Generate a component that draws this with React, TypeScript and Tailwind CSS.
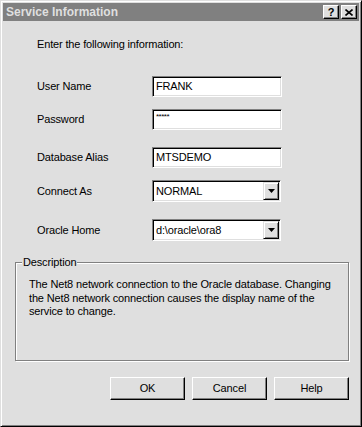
import React from 'react';

const font = { fontFamily: '"Liberation Sans", Arial, sans-serif' };

const sunken =
  'bg-white border border-t-[#808080] border-l-[#808080] border-b-white border-r-white shadow-[inset_1px_1px_0_#000,inset_-1px_-1px_0_#dfdfdf]';

const raised =
  'bg-[#dfdfdf] border border-t-white border-l-white border-b-black border-r-black shadow-[inset_-1px_-1px_0_#808080]';

const TextBox: React.FC<{ children: React.ReactNode }> = ({ children }) => (
  <div className={`w-[130px] h-[21px] flex items-center px-[3px] ${sunken}`}>{children}</div>
);

const ComboBox: React.FC<{ value: string }> = ({ value }) => (
  <div className={`w-[129px] h-[22px] flex items-center pl-[3px] pr-[1px] ${sunken}`}>
    <span className="flex-1">{value}</span>
    <div className="w-[16px] h-[18px] flex items-center justify-center border border-t-[#dfdfdf] border-l-[#dfdfdf] border-b-black border-r-black bg-[#dfdfdf] shadow-[inset_1px_1px_0_#fff,inset_-1px_-1px_0_#808080]">
      <svg width="7" height="4" viewBox="0 0 7 4">
        <path d="M0 0h7L3.5 4z" fill="#000" />
      </svg>
    </div>
  </div>
);

const Row: React.FC<{ label: string; mt: string; children: React.ReactNode }> = ({ label, mt, children }) => (
  <div className={`flex items-center ml-[34px] ${mt}`}>
    <div className="w-[115px]">{label}</div>
    {children}
  </div>
);

export default function App() {
  return (
    <div
      className="w-[362px] h-[427px] bg-[#dfdfdf] border border-t-[#dfdfdf] border-l-[#dfdfdf] border-b-black border-r-black shadow-[inset_1px_1px_0_#fff,inset_-1px_-1px_0_#808080] p-[2px] flex flex-col text-[11px] leading-[13px] tracking-[-0.15px] text-black"
      style={font}
    >
      {/* title bar */}
      <div className="h-[18px] bg-[#808080] flex items-center pl-[3px] pr-[2px]">
        <span className="flex-1 text-[12px] font-bold text-[#dfdfdf] tracking-normal">Service Information</span>
        <div className="flex gap-[2px]">
          <div className={`w-[16px] h-[14px] flex items-center justify-center font-bold text-[11px] leading-none ${raised}`}>
            ?
          </div>
          <div className={`w-[16px] h-[14px] flex items-center justify-center ${raised}`}>
            <svg width="8" height="7" viewBox="0 0 8 7">
              <path d="M0.5 0.5L7.5 6.5M7.5 0.5L0.5 6.5" stroke="#000" strokeWidth="1.6" />
            </svg>
          </div>
        </div>
      </div>

      <div className="mt-[17px] ml-[34px]">Enter the following information:</div>

      <Row label="User Name" mt="mt-[25px]">
        <TextBox>FRANK</TextBox>
      </Row>
      <Row label="Password" mt="mt-[12px]">
        <div className={`w-[130px] h-[21px] flex items-start px-[3px] pt-[3px] ${sunken}`}>
          <span className="text-[8px] leading-none tracking-[-0.5px]">*****</span>
        </div>
      </Row>
      <Row label="Database Alias" mt="mt-[17px]">
        <TextBox>MTSDEMO</TextBox>
      </Row>
      <Row label="Connect As" mt="mt-[12px]">
        <ComboBox value="NORMAL" />
      </Row>
      <Row label="Oracle Home" mt="mt-[17px]">
        <ComboBox value="d:\oracle\ora8" />
      </Row>

      <fieldset className="mt-[15px] ml-[12px] w-[334px] h-[105px] border border-[#808080] shadow-[inset_1px_1px_0_#fff,1px_1px_0_#fff] px-[6px]">
        <legend className="px-[1px] bg-[#dfdfdf] leading-[13px]">Description</legend>
        <p className="mt-[9px] ml-[7px] leading-[13.5px] whitespace-nowrap">
          The Net8 network connection to the Oracle database. Changing
          <br />
          the Net8 network connection causes the display name of the
          <br />
          service to change.
        </p>
      </fieldset>

      <div className="mt-[16px] flex justify-end gap-[7px] pr-[10px]">
        {['OK', 'Cancel', 'Help'].map((b) => (
          <div key={b} className={`w-[75px] h-[23px] flex items-center justify-center ${raised}`}>
            {b}
          </div>
        ))}
      </div>
    </div>
  );
}
